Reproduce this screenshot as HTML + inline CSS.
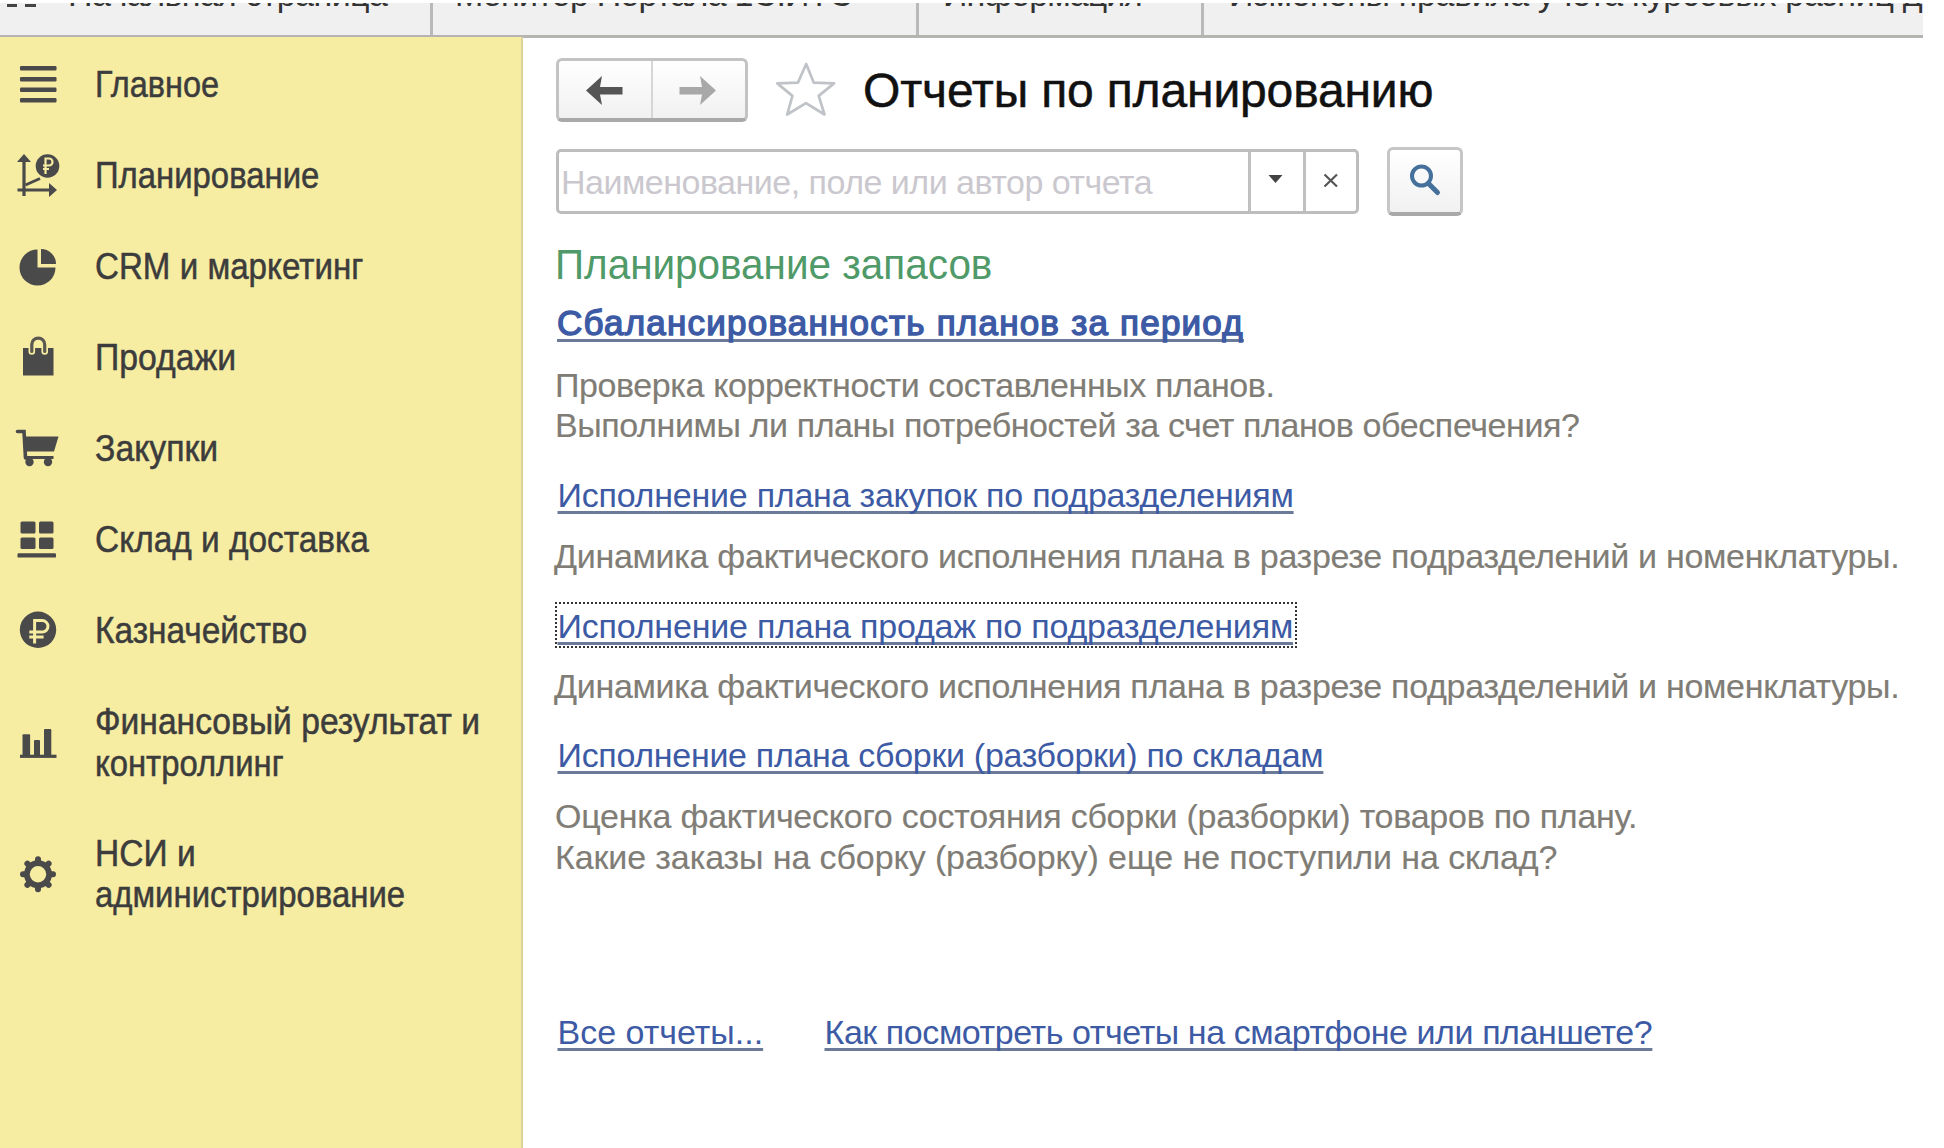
<!DOCTYPE html>
<html><head><meta charset="utf-8">
<style>
html,body{margin:0;padding:0;}
body{width:1944px;height:1148px;position:relative;overflow:hidden;background:#fff;font-family:"Liberation Sans",sans-serif;}
.a{position:absolute;}
.t{position:absolute;white-space:nowrap;line-height:1;}
#tabs{left:0;top:3px;width:1923px;height:32px;background:#f0f0f1;overflow:hidden;}
#tabline{left:0;top:35px;width:1923px;height:3px;background:#b4b4b0;}
.sep{position:absolute;top:3px;width:3px;height:33px;background:#b9b9b9;}
#side{left:0;top:37px;width:521px;height:1111px;background:#f6eca2;}
#sideb{left:521px;top:37px;width:2px;height:1111px;background:#dcd39a;}
.sb{font-size:36px;color:#3c3c3c;left:95px;transform-origin:0 0;-webkit-text-stroke:0.5px #3c3c3c;}
.ic{position:absolute;left:0;}
.c{font-size:34px;}
.lnk{color:#3d5aa5;text-decoration:underline;text-decoration-color:#6a7a98;text-decoration-thickness:3px;text-underline-offset:4px;text-decoration-skip-ink:none;}
.d{color:#807d76;-webkit-text-stroke:0.15px #807d76;letter-spacing:-0.3px;}
#root{position:absolute;left:0;top:0;width:1944px;height:1148px;background:#fff;overflow:hidden;}
</style></head><body><div id="root">

<!-- tab bar -->
<div id="tabs" class="a">
  <div class="a" style="left:7px;top:1px;width:10px;height:3px;background:#444;"></div>
  <div class="a" style="left:25px;top:1px;width:11px;height:3px;background:#444;"></div>
  <div class="t" style="left:68px;top:-26.2px;font-size:34px;color:#333;letter-spacing:-0.53px">Начальная страница</div>
  <div class="t" style="left:455px;top:-26.2px;font-size:34px;color:#333;letter-spacing:-0.76px">Монитор Портала 1С:ИТС</div>
  <div class="t" style="left:943px;top:-26.2px;font-size:34px;color:#333;letter-spacing:-0.94px">Информация</div>
  <div class="t" style="left:1229px;top:-26.2px;font-size:34px;color:#333;letter-spacing:-0.31px">Изменены правила учета курсовых разниц д</div>
</div>
<div class="sep" style="left:430px"></div>
<div class="sep" style="left:916px"></div>
<div class="sep" style="left:1201px"></div>
<div id="tabline" class="a"></div>

<!-- sidebar -->
<div id="side" class="a"></div>
<div id="sideb" class="a"></div>

<svg class="ic" style="top:0" width="80" height="1148" viewBox="0 0 80 1148">
 <g fill="#4a4a4a">
  <!-- hamburger -->
  <rect x="20" y="66" width="36.5" height="4.4" rx="1.2"/>
  <rect x="20" y="77" width="36.5" height="4.4" rx="1.2"/>
  <rect x="20" y="87.5" width="36.5" height="4.4" rx="1.2"/>
  <rect x="20" y="98" width="36.5" height="4.4" rx="1.2"/>

  <!-- planning -->
  <path d="M24,158 V196 M17.5,190 H52" stroke="#4a4a4a" stroke-width="3.2" fill="none"/>
  <path d="M17,162 L24,154 L31,162 Z M49,183 L57,190 L49,197 Z"/>
  <path d="M25.5,185 L40,178.5" stroke="#4a4a4a" stroke-width="3" fill="none"/>
  <circle cx="47.5" cy="166" r="11.8"/>
  <path d="M45.5,174 V158.5 H49 A3.5,3.5 0 0 1 49,165.5 H43 M43,169 H49" stroke="#f6eca2" stroke-width="2.2" fill="none"/>
  <!-- pie -->
  <path d="M37.5,267.5 V249.5 A18,18 0 1 0 55.5,267.5 Z"/>
  <path d="M41,264 V249 A15,15 0 0 1 56,264 Z"/>
  <!-- bag -->
  <path d="M23,348 H53.5 V375.5 H23 Z"/>
  <path d="M31.8,351.5 V344.5 A6.45,6.45 0 0 1 44.7,344.5 V351.5" stroke="#f6eca2" stroke-width="6.6" fill="none" stroke-linecap="round"/>
  <path d="M31.8,351.5 V344.5 A6.45,6.45 0 0 1 44.7,344.5 V351.5" stroke="#5a5850" stroke-width="3.2" fill="none" stroke-linecap="round"/>
  <!-- cart -->
  <path d="M17.5,431.5 H24 L25.5,458" stroke="#4a4a4a" stroke-width="3.6" fill="none" stroke-linecap="round"/>
  <path d="M24,436.5 H58.5 L54,451.5 H24.5 Z"/>
  <rect x="25" y="456" width="28.5" height="3"/>
  <circle cx="29.5" cy="462" r="4.2"/>
  <circle cx="48" cy="462" r="4.2"/>
  <!-- warehouse -->
  <rect x="20.5" y="521.5" width="15" height="12" rx="1.5"/>
  <rect x="39" y="521.5" width="14.5" height="12" rx="1.5"/>
  <rect x="20.5" y="537.5" width="15" height="11.5" rx="1.5"/>
  <rect x="39" y="537.5" width="14.5" height="11.5" rx="1.5"/>
  <rect x="17.5" y="553.2" width="38.5" height="4.4" rx="1.2"/>
  <!-- ruble -->
  <circle cx="38" cy="629.8" r="18.2"/>
  <path d="M34.6,643.5 V620.6 H42.2 A5.75,5.75 0 0 1 42.2,632.1 H29.3 M29.3,637 H43.6" stroke="#f6eca2" stroke-width="3" fill="none"/>
  <!-- chart -->
  <rect x="22.5" y="734.3" width="7.6" height="21.5" rx="1"/>
  <rect x="34" y="740.1" width="6" height="15.7" rx="1"/>
  <rect x="44" y="729.1" width="7.3" height="26.7" rx="1"/>
  <rect x="20" y="754.7" width="36.5" height="3.2"/>
  <!-- gear -->
  <circle cx="38" cy="874.3" r="14"/>
  <path d="M38.00,864.30 L38.00,859.30 M45.07,867.23 L48.61,863.69 M48.00,874.30 L53.00,874.30 M45.07,881.37 L48.61,884.91 M38.00,884.30 L38.00,889.30 M30.93,881.37 L27.39,884.91 M28.00,874.30 L23.00,874.30 M30.93,867.23 L27.39,863.69" stroke="#4a4a4a" stroke-width="6" stroke-linecap="round" fill="none"/>
  <circle cx="38" cy="874.3" r="8.2" fill="#f6eca2"/>
 </g>
</svg>

<div class="t sb" style="top:67px;transform:scaleX(0.9023)">Главное</div>
<div class="t sb" style="top:157.5px;transform:scaleX(0.9129)">Планирование</div>
<div class="t sb" style="top:248.5px;transform:scaleX(0.9204)">CRM и маркетинг</div>
<div class="t sb" style="top:340px;transform:scaleX(0.9379)">Продажи</div>
<div class="t sb" style="top:431px;transform:scaleX(0.9375)">Закупки</div>
<div class="t sb" style="top:521.8px;transform:scaleX(0.9283)">Склад и доставка</div>
<div class="t sb" style="top:613px;transform:scaleX(0.9286)">Казначейство</div>
<div class="t sb" style="top:703.5px;transform:scaleX(0.9338)">Финансовый результат и</div>
<div class="t sb" style="top:745.5px;transform:scaleX(0.9118)">контроллинг</div>
<div class="t sb" style="top:836px;transform:scaleX(0.9320)">НСИ и</div>
<div class="t sb" style="top:876.5px;transform:scaleX(0.9139)">администрирование</div>


<!-- nav buttons -->
<div class="a" style="left:556px;top:58px;width:186px;height:57px;border:3px solid #c3c3c3;border-bottom-width:4px;border-bottom-color:#a9a9a9;border-radius:6px;background:linear-gradient(#ffffff,#f1f1f1);"></div>
<div class="a" style="left:651px;top:61px;width:2px;height:57px;background:#d6d6d6;"></div>
<svg class="a" style="left:540px;top:50px" width="320" height="80" viewBox="540 50 320 80">
  <path d="M586,90.5 L602,76 L600,87 L622.5,87 L622.5,94.5 L600,94.5 L602,105 Z" fill="#555"/>
  <path d="M716,90.5 L700,76 L702,87 L679.5,87 L679.5,94.5 L702,94.5 L700,105 Z" fill="#a8a8a8"/>
  <path d="M806.2,64 L813.8,82.7 L834,83.4 L818.7,95.9 L824.5,114.5 L806,103.2 L787.2,114.5 L792.4,95.9 L777.3,83.4 L797.9,82.7 Z" fill="none" stroke="#bfc2c6" stroke-width="2.7" stroke-linejoin="round"/>
</svg>

<!-- search -->
<div class="a" style="left:556px;top:149px;width:797px;height:59px;border:3px solid #bdbdbd;border-radius:5px;background:#fff;"></div>
<div class="a" style="left:1248px;top:152px;width:3px;height:59px;background:#c0c0c0;"></div>
<div class="a" style="left:1303px;top:152px;width:3px;height:59px;background:#c0c0c0;"></div>
<div class="t c" style="left:561px;top:164.5px;color:#cac8ce;letter-spacing:-0.5px">Наименование, поле или автор отчета</div>
<svg class="a" style="left:1240px;top:140px" width="240" height="90" viewBox="1240 140 240 90">
  <path d="M1268.5,175 L1282.5,175 L1275.5,183 Z" fill="#444"/>
  <path d="M1324.5,174.5 L1337,186.5 M1337,174.5 L1324.5,186.5" stroke="#555" stroke-width="2.2"/>
</svg>
<div class="a" style="left:1387px;top:147px;width:70px;height:62px;border:3px solid #c6c6c6;border-bottom-width:4px;border-bottom-color:#a9a9a9;border-radius:6px;background:linear-gradient(#ffffff,#f1f1f1);"></div>
<svg class="a" style="left:1380px;top:140px" width="90" height="90" viewBox="1380 140 90 90">
  <circle cx="1421.5" cy="176" r="9.5" fill="none" stroke="#46709c" stroke-width="4"/>
  <path d="M1428.5,183.5 L1437.5,192.5" stroke="#46709c" stroke-width="5" stroke-linecap="round"/>
</svg>

<!-- focus rect -->
<div class="a" style="left:555px;top:602px;width:738px;height:42px;border:2px dotted #333;"></div>

<!-- content -->
<div class="t" style="left:863px;top:67px;font-size:48px;color:#111;letter-spacing:-0.15px;-webkit-text-stroke:0.5px #111;">Отчеты по планированию</div>
<div class="t" style="left:554.5px;top:243.5px;font-size:42px;color:#4f9a68;transform:scaleX(0.963);transform-origin:0 0">Планирование запасов</div>

<div class="t c lnk" style="left:557px;top:305.2px;font-size:35px;letter-spacing:1.22px;-webkit-text-stroke:1.4px #3d5aa5;text-underline-offset:3.5px">Сбалансированность планов за период</div>
<div class="t c d" style="left:555px;top:367.5px;letter-spacing:-0.4px">Проверка корректности составленных планов.</div>
<div class="t c d" style="left:555px;top:407.5px;letter-spacing:-0.4px">Выполнимы ли планы потребностей за счет планов обеспечения?</div>

<div class="t c lnk" style="left:557.5px;top:478px;letter-spacing:-0.23px">Исполнение плана закупок по подразделениям</div>
<div class="t c d" style="left:554px;top:538.5px">Динамика фактического исполнения плана в разрезе подразделений и номенклатуры.</div>

<div class="t c lnk" style="left:557.5px;top:608.5px;letter-spacing:-0.2px">Исполнение плана продаж по подразделениям</div>
<div class="t c d" style="left:554px;top:668.5px">Динамика фактического исполнения плана в разрезе подразделений и номенклатуры.</div>

<div class="t c lnk" style="left:557.5px;top:738px;letter-spacing:-0.3px">Исполнение плана сборки (разборки) по складам</div>
<div class="t c d" style="left:555px;top:798.5px;letter-spacing:-0.25px">Оценка фактического состояния сборки (разборки) товаров по плану.</div>
<div class="t c d" style="left:555px;top:840px;letter-spacing:-0.1px">Какие заказы на сборку (разборку) еще не поступили на склад?</div>

<div class="t c lnk" style="left:557.5px;top:1014.5px;letter-spacing:0px">Все отчеты...</div>
<div class="t c lnk" style="left:824.5px;top:1014.5px;letter-spacing:-0.42px">Как посмотреть отчеты на смартфоне или планшете?</div>

</div></body></html>
